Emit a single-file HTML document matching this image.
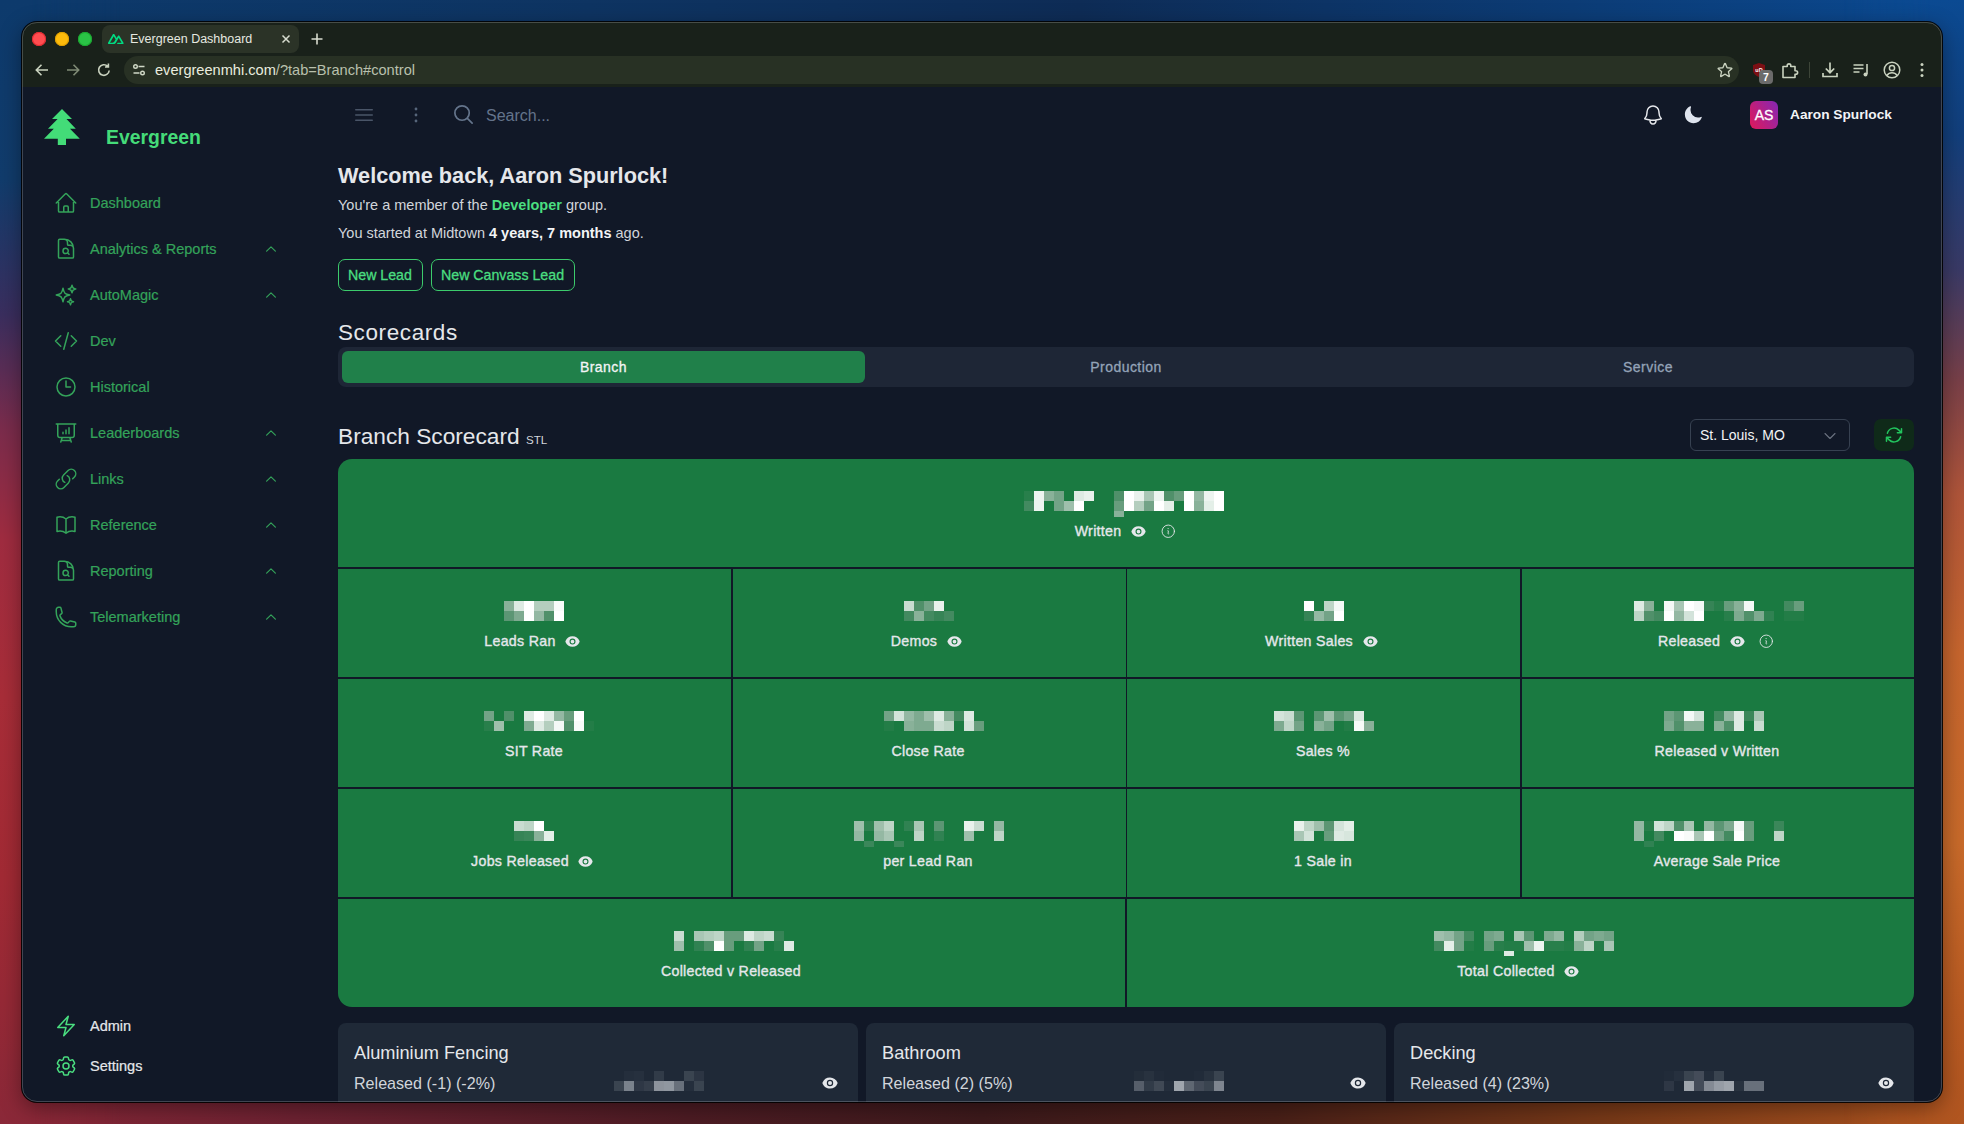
<!DOCTYPE html>
<html><head><meta charset="utf-8">
<style>
*{box-sizing:border-box;margin:0;padding:0}
html,body{width:1964px;height:1124px;overflow:hidden}
body{font-family:"Liberation Sans",sans-serif;position:relative;background:#3a1a22}
.bgl{position:absolute;left:0;top:0;width:120px;-webkit-mask-image:linear-gradient(90deg,#000 30px,transparent 120px);height:1124px;background:linear-gradient(180deg,#0d3a6c 0%,#113c6c 16%,#3a2e5e 28%,#7a2c4c 38%,#a02c40 48%,#a82d38 62%,#a22a34 78%,#8a2838 100%)}
.bgr{position:absolute;left:1844px;top:0;width:120px;-webkit-mask-image:linear-gradient(90deg,transparent 0,#000 90px);height:1124px;background:linear-gradient(180deg,#0b4a92 0%,#123f7c 12%,#3a3a66 24%,#7a4048 34%,#b0553a 44%,#c6652e 58%,#c86a2a 75%,#b85a22 90%,#b05520 100%)}
.bgt{position:absolute;left:0;top:0;width:1964px;height:44px;background:linear-gradient(90deg,#0d3a6c 0%,#0e3462 30%,#0e2c56 55%,#0c3c76 80%,#0b4a92 100%)}
.bgb{position:absolute;left:0;top:1080px;width:1964px;height:44px;background:linear-gradient(90deg,#8a2838 0%,#6e2232 15%,#4e1c24 35%,#3e1a1c 50%,#4a2018 65%,#7a3a18 82%,#b05520 100%)}
.abs{position:absolute}
.win{position:absolute;left:22px;top:22px;width:1920px;height:1080px;border-radius:15px;background:#111827;overflow:hidden;box-shadow:0 0 0 1px rgba(0,0,0,.9),0 6px 22px rgba(0,0,0,.4)}
.hl{position:absolute;left:22px;top:22px;width:1920px;height:1080px;border-radius:15px;border:1px solid rgba(255,255,255,.2)}
.chrome{position:absolute;left:0;top:0;width:1920px;height:65px;background:#19211a}
.page{position:absolute;left:0;top:0;width:1964px;height:1124px;clip-path:inset(22px 22px 22px 22px round 15px)}
svg{display:block}
.t{position:absolute;white-space:nowrap;line-height:1}
.nav{position:absolute;left:0;width:300px;height:40px}
.nav svg{position:absolute;left:54px;top:8px}
.nav span{position:absolute;left:90px;top:13px;font-size:14.3px;color:#34a35a;line-height:1}
.nav .chev{position:absolute;left:263px;top:12px}
</style></head><body>
<div class="bgt"></div><div class="bgb"></div><div class="bgl"></div><div class="bgr"></div>
<div class="win">
  <div class="chrome"></div>
</div>
<div class="page">
<!-- traffic lights -->
<div class="abs" style="left:32px;top:32px;width:14px;height:14px;border-radius:50%;background:#ff4d50;box-shadow:inset 0 0 0 1px #e02a30"></div>
<div class="abs" style="left:55px;top:32px;width:14px;height:14px;border-radius:50%;background:#fdbb0c;box-shadow:inset 0 0 0 1px #e0a000"></div>
<div class="abs" style="left:78px;top:32px;width:14px;height:14px;border-radius:50%;background:#2ac246;box-shadow:inset 0 0 0 1px #1aa830"></div>
<!-- tab -->
<div class="abs" style="left:102px;top:25px;width:197px;height:28px;border-radius:8px;background:#2b3327"></div>
<svg class="abs" style="left:108px;top:33.7px" width="15.6" height="10.3" viewBox="0 0 48.5 32"><path fill="#00dc82" d="M26.88 32H44.64C45.2 32 45.76 31.84 46.24 31.68C46.72 31.52 47.2 31.04 47.52 30.72C47.84 30.4 48.16 29.920 48.32 29.28C48.48 28.8 48.48 28.16 48.32 27.68C48.16 27.2 48 26.72 47.68 26.24L35.68 6.08C35.36 5.6 35.04 5.12 34.56 4.96C34.08 4.64 33.6 4.48 33.120 4.48C32.64 4.48 32.16 4.64 31.68 4.8C31.2 5.12 30.88 5.44 30.56 5.92L26.88 12.32L19.84 0.96C19.52 0.48 19.2 0.16 18.72 0C18.24-0.16 17.76 0 17.28 0C16.8 0 16.32 0.16 15.84 0.32C15.36 0.64 15.04 0.96 14.72 1.44L0.48 26.24C0.16 26.72 0 27.2 0 27.68C0 28.16 0 28.8 0.16 29.28C0.32 29.76 0.64 30.24 0.96 30.72C1.28 31.2 1.76 31.52 2.24 31.68C2.72 31.84 3.28 32 3.84 32H15.04C19.52 32 22.72 30.08 24.96 26.24L30.4 16.8L33.28 11.84L42.08 26.88H30.4L26.88 32ZM14.08 26.88H6.24L17.920 6.720L23.68 16.8L19.84 23.52C18.4 25.92 16.8 26.88 14.08 26.88Z"/></svg>
<div class="t" style="left:130px;top:33px;font-size:12.5px;color:#e6e9e0">Evergreen Dashboard</div>
<svg class="abs" style="left:281px;top:34px" width="10" height="10" viewBox="0 0 10 10"><path d="M1.5 1.5l7 7M8.5 1.5l-7 7" stroke="#d7dccf" stroke-width="1.5"/></svg>
<svg class="abs" style="left:310px;top:32px" width="14" height="14" viewBox="0 0 14 14"><path d="M7 1.5v11M1.5 7h11" stroke="#d7dccf" stroke-width="1.6"/></svg>
<!-- toolbar -->
<svg class="abs" style="left:33px;top:61px" width="18" height="18" viewBox="0 0 18 18"><path d="M15 9H3.5M8.5 3.8L3.3 9l5.2 5.2" fill="none" stroke="#c9d2bf" stroke-width="1.6"/></svg>
<svg class="abs" style="left:64px;top:61px" width="18" height="18" viewBox="0 0 18 18"><path d="M3 9h11.5M9.5 3.8L14.7 9l-5.2 5.2" fill="none" stroke="#7f8a75" stroke-width="1.6"/></svg>
<svg class="abs" style="left:95px;top:61px" width="18" height="18" viewBox="0 0 18 18"><path d="M14.2 9.5a5.3 5.3 0 1 1-1.6-4.3M13.4 2.6v3.4H10" fill="none" stroke="#c9d2bf" stroke-width="1.6"/></svg>
<div class="abs" style="left:124px;top:56px;width:1615px;height:28px;border-radius:14px;background:#283124"></div>
<svg class="abs" style="left:131px;top:62px" width="16" height="16" viewBox="0 0 16 16"><g fill="none" stroke="#d0d8c6" stroke-width="1.4"><circle cx="4.5" cy="4.5" r="1.8"/><path d="M7.5 4.5h6M2.5 11h6"/><circle cx="11.5" cy="11" r="1.8"/></g></svg>
<div class="t" style="left:155px;top:63px;font-size:14.6px;color:#e9ecdf">evergreenmhi.com<span style="color:#b9c0ad">/?tab=Branch#control</span></div>
<svg class="abs" style="left:1716px;top:61px" width="18" height="18" viewBox="0 0 24 24"><path d="M11.48 3.5a.56.56 0 011.04 0l2.12 5.11a.56.56 0 00.48.35l5.52.44c.5.04.7.66.32.99l-4.2 3.6a.56.56 0 00-.18.56l1.28 5.39a.56.56 0 01-.84.61l-4.72-2.88a.56.56 0 00-.59 0l-4.72 2.88a.56.56 0 01-.84-.61l1.28-5.39a.56.56 0 00-.18-.56l-4.2-3.6a.56.56 0 01.32-.99l5.52-.44a.56.56 0 00.47-.35z" fill="none" stroke="#c9d2bf" stroke-width="1.8"/></svg>
<!-- extensions -->
<svg class="abs" style="left:1751px;top:62px" width="16" height="16" viewBox="0 0 16 16"><path d="M8 1 L14 3 V8 C14 11.5 11 14 8 15 C5 14 2 11.5 2 8 V3 Z" fill="#7c0f14"/><text x="8" y="10" font-size="5.5" fill="#fff" text-anchor="middle" font-family="Liberation Sans" font-weight="bold">uD</text></svg>
<div class="abs" style="left:1759px;top:70px;width:14px;height:14px;border-radius:4px;background:#6b6b6b;color:#fff;font-size:10.5px;font-weight:bold;text-align:center;line-height:14px">7</div>
<svg class="abs" style="left:1780px;top:60px" width="20" height="20" viewBox="0 0 20 20"><path d="M3 6.5h4.2v-.8a1.8 1.8 0 013.6 0v.8H15v4.2h.8a1.8 1.8 0 010 3.6H15v3.2H3z" fill="none" stroke="#c9d2bf" stroke-width="1.6" stroke-linejoin="round"/></svg>
<div class="abs" style="left:1809px;top:62px;width:1px;height:16px;background:#3d4538"></div>
<svg class="abs" style="left:1820px;top:60px" width="20" height="20" viewBox="0 0 20 20"><path d="M10 2.5v10M5.8 8.5L10 12.7l4.2-4.2M3 13v3.5h14V13" fill="none" stroke="#c9d2bf" stroke-width="1.7"/></svg>
<svg class="abs" style="left:1851px;top:60px" width="20" height="20" viewBox="0 0 20 20"><path d="M2.5 5h10M2.5 8.5h10M2.5 12h6M16 4v10" fill="none" stroke="#c9d2bf" stroke-width="1.6"/><circle cx="14.5" cy="14.5" r="2" fill="#c9d2bf"/></svg>
<svg class="abs" style="left:1882px;top:60px" width="20" height="20" viewBox="0 0 20 20"><g fill="none" stroke="#c9d2bf" stroke-width="1.5"><circle cx="10" cy="10" r="7.8"/><circle cx="10" cy="8" r="2.6"/><path d="M4.8 15.5c1.4-2 3.2-2.8 5.2-2.8s3.8.8 5.2 2.8"/></g></svg>
<svg class="abs" style="left:1914px;top:60px" width="16" height="20" viewBox="0 0 16 20"><g fill="#c9d2bf"><circle cx="8" cy="4.5" r="1.5"/><circle cx="8" cy="10" r="1.5"/><circle cx="8" cy="15.5" r="1.5"/></g></svg>

<!-- SIDEBAR -->
<svg class="abs" style="left:44px;top:109px" width="36" height="36" viewBox="0 0 36 36"><path fill="#43dc78" d="M18 0 L28 10 H22.5 L31.8 19.8 H26 L35.8 29.8 H22 V36 H13.8 V29.8 H0 L9.8 19.8 H4 L13.6 10 H8 Z"/></svg>
<div class="t" style="left:106px;top:128px;font-size:19.4px;font-weight:bold;color:#45db79">Evergreen</div>

<svg class="abs" style="left:54px;top:191px" width="24" height="24" viewBox="0 0 24 24"><path d="M2.25 12l8.954-8.955c.44-.439 1.152-.439 1.591 0L21.75 12M4.5 9.75v10.125c0 .621.504 1.125 1.125 1.125H9.75v-4.875c0-.621.504-1.125 1.125-1.125h2.25c.621 0 1.125.504 1.125 1.125V21h4.125c.621 0 1.125-.504 1.125-1.125V9.75M8.25 21h8.25" fill="none" stroke="#34a35a" stroke-width="1.5" stroke-linecap="round" stroke-linejoin="round"/></svg>
<div class="t" style="left:90px;top:196px;font-size:14.5px;color:#34a35a;font-weight:normal;-webkit-text-stroke:0.2px #34a35a">Dashboard</div>
<svg class="abs" style="left:54px;top:237px" width="24" height="24" viewBox="0 0 24 24"><path d="M19.5 14.25v-2.625a3.375 3.375 0 00-3.375-3.375h-1.5A1.125 1.125 0 0113.5 7.125v-1.5a3.375 3.375 0 00-3.375-3.375H8.25m5.231 13.481L15 17.25m-4.5-15H5.625c-.621 0-1.125.504-1.125 1.125v16.5c0 .621.504 1.125 1.125 1.125h12.75c.621 0 1.125-.504 1.125-1.125V11.25a9 9 0 00-9-9zm3.75 11.625a2.625 2.625 0 11-5.25 0 2.625 2.625 0 015.25 0z" fill="none" stroke="#34a35a" stroke-width="1.5" stroke-linecap="round" stroke-linejoin="round"/></svg>
<div class="t" style="left:90px;top:242px;font-size:14.5px;color:#34a35a;font-weight:normal;-webkit-text-stroke:0.2px #34a35a">Analytics &amp; Reports</div>
<svg class="abs" style="left:264px;top:242px" width="14" height="14" viewBox="0 0 24 24"><path d="M4.5 15.75l7.5-7.5 7.5 7.5" fill="none" stroke="#34a35a" stroke-width="2" stroke-linecap="round" stroke-linejoin="round"/></svg>
<svg class="abs" style="left:54px;top:283px" width="24" height="24" viewBox="0 0 24 24"><path d="M9.813 15.904L9 18.75l-.813-2.846a4.5 4.5 0 00-3.09-3.09L2.25 12l2.846-.813a4.5 4.5 0 003.09-3.09L9 5.25l.813 2.846a4.5 4.5 0 003.09 3.09L15.75 12l-2.846.813a4.5 4.5 0 00-3.09 3.09zM18.259 8.715L18 9.75l-.259-1.035a3.375 3.375 0 00-2.455-2.456L14.25 6l1.036-.259a3.375 3.375 0 002.455-2.456L18 2.25l.259 1.035a3.375 3.375 0 002.456 2.456L21.75 6l-1.035.259a3.375 3.375 0 00-2.456 2.456zM16.894 20.567L16.5 21.75l-.394-1.183a2.25 2.25 0 00-1.423-1.423L13.5 18.75l1.183-.394a2.25 2.25 0 001.423-1.423l.394-1.183.394 1.183a2.25 2.25 0 001.423 1.423l1.183.394-1.183.394a2.25 2.25 0 00-1.423 1.423z" fill="none" stroke="#34a35a" stroke-width="1.5" stroke-linecap="round" stroke-linejoin="round"/></svg>
<div class="t" style="left:90px;top:288px;font-size:14.5px;color:#34a35a;font-weight:normal;-webkit-text-stroke:0.2px #34a35a">AutoMagic</div>
<svg class="abs" style="left:264px;top:288px" width="14" height="14" viewBox="0 0 24 24"><path d="M4.5 15.75l7.5-7.5 7.5 7.5" fill="none" stroke="#34a35a" stroke-width="2" stroke-linecap="round" stroke-linejoin="round"/></svg>
<svg class="abs" style="left:54px;top:329px" width="24" height="24" viewBox="0 0 24 24"><path d="M17.25 6.75L22.5 12l-5.25 5.25m-10.5 0L1.5 12l5.25-5.25m7.5-3l-4.5 16.5" fill="none" stroke="#34a35a" stroke-width="1.5" stroke-linecap="round" stroke-linejoin="round"/></svg>
<div class="t" style="left:90px;top:334px;font-size:14.5px;color:#34a35a;font-weight:normal;-webkit-text-stroke:0.2px #34a35a">Dev</div>
<svg class="abs" style="left:54px;top:375px" width="24" height="24" viewBox="0 0 24 24"><path d="M12 6v6h4.5m4.5 0a9 9 0 11-18 0 9 9 0 0118 0z" fill="none" stroke="#34a35a" stroke-width="1.5" stroke-linecap="round" stroke-linejoin="round"/></svg>
<div class="t" style="left:90px;top:380px;font-size:14.5px;color:#34a35a;font-weight:normal;-webkit-text-stroke:0.2px #34a35a">Historical</div>
<svg class="abs" style="left:54px;top:421px" width="24" height="24" viewBox="0 0 24 24"><path d="M3.75 3v11.25A2.25 2.25 0 006 16.5h2.25M3.75 3h-1.5m1.5 0h16.5m0 0h1.5m-1.5 0v11.25A2.25 2.25 0 0118 16.5h-2.25m-7.5 0h7.5m-7.5 0l-1 3m8.5-3l1 3m0 0l.5 1.5m-.5-1.5h-9.5m0 0l-.5 1.5M9 11.25v1.5M12 9v3.75m3-6v6" fill="none" stroke="#34a35a" stroke-width="1.5" stroke-linecap="round" stroke-linejoin="round"/></svg>
<div class="t" style="left:90px;top:426px;font-size:14.5px;color:#34a35a;font-weight:normal;-webkit-text-stroke:0.2px #34a35a">Leaderboards</div>
<svg class="abs" style="left:264px;top:426px" width="14" height="14" viewBox="0 0 24 24"><path d="M4.5 15.75l7.5-7.5 7.5 7.5" fill="none" stroke="#34a35a" stroke-width="2" stroke-linecap="round" stroke-linejoin="round"/></svg>
<svg class="abs" style="left:54px;top:467px" width="24" height="24" viewBox="0 0 24 24"><path d="M13.19 8.688a4.5 4.5 0 011.242 7.244l-4.5 4.5a4.5 4.5 0 01-6.364-6.364l1.757-1.757m13.35-.622l1.757-1.757a4.5 4.5 0 00-6.364-6.364l-4.5 4.5a4.5 4.5 0 001.242 7.244" fill="none" stroke="#34a35a" stroke-width="1.5" stroke-linecap="round" stroke-linejoin="round"/></svg>
<div class="t" style="left:90px;top:472px;font-size:14.5px;color:#34a35a;font-weight:normal;-webkit-text-stroke:0.2px #34a35a">Links</div>
<svg class="abs" style="left:264px;top:472px" width="14" height="14" viewBox="0 0 24 24"><path d="M4.5 15.75l7.5-7.5 7.5 7.5" fill="none" stroke="#34a35a" stroke-width="2" stroke-linecap="round" stroke-linejoin="round"/></svg>
<svg class="abs" style="left:54px;top:513px" width="24" height="24" viewBox="0 0 24 24"><path d="M12 6.042A8.967 8.967 0 006 3.75c-1.052 0-2.062.18-3 .512v14.25A8.987 8.987 0 016 18c2.305 0 4.408.867 6 2.292m0-14.25a8.966 8.966 0 016-2.292c1.052 0 2.062.18 3 .512v14.25A8.987 8.987 0 0018 18a8.967 8.967 0 00-6 2.292m0-14.25v14.25" fill="none" stroke="#34a35a" stroke-width="1.5" stroke-linecap="round" stroke-linejoin="round"/></svg>
<div class="t" style="left:90px;top:518px;font-size:14.5px;color:#34a35a;font-weight:normal;-webkit-text-stroke:0.2px #34a35a">Reference</div>
<svg class="abs" style="left:264px;top:518px" width="14" height="14" viewBox="0 0 24 24"><path d="M4.5 15.75l7.5-7.5 7.5 7.5" fill="none" stroke="#34a35a" stroke-width="2" stroke-linecap="round" stroke-linejoin="round"/></svg>
<svg class="abs" style="left:54px;top:559px" width="24" height="24" viewBox="0 0 24 24"><path d="M19.5 14.25v-2.625a3.375 3.375 0 00-3.375-3.375h-1.5A1.125 1.125 0 0113.5 7.125v-1.5a3.375 3.375 0 00-3.375-3.375H8.25m5.231 13.481L15 17.25m-4.5-15H5.625c-.621 0-1.125.504-1.125 1.125v16.5c0 .621.504 1.125 1.125 1.125h12.75c.621 0 1.125-.504 1.125-1.125V11.25a9 9 0 00-9-9zm3.75 11.625a2.625 2.625 0 11-5.25 0 2.625 2.625 0 015.25 0z" fill="none" stroke="#34a35a" stroke-width="1.5" stroke-linecap="round" stroke-linejoin="round"/></svg>
<div class="t" style="left:90px;top:564px;font-size:14.5px;color:#34a35a;font-weight:normal;-webkit-text-stroke:0.2px #34a35a">Reporting</div>
<svg class="abs" style="left:264px;top:564px" width="14" height="14" viewBox="0 0 24 24"><path d="M4.5 15.75l7.5-7.5 7.5 7.5" fill="none" stroke="#34a35a" stroke-width="2" stroke-linecap="round" stroke-linejoin="round"/></svg>
<svg class="abs" style="left:54px;top:605px" width="24" height="24" viewBox="0 0 24 24"><path d="M2.25 6.75c0 8.284 6.716 15 15 15h2.25a2.25 2.25 0 002.25-2.25v-1.372c0-.516-.351-.966-.852-1.091l-4.423-1.106c-.44-.11-.902.055-1.173.417l-.97 1.293c-.282.376-.769.542-1.21.38a12.035 12.035 0 01-7.143-7.143c-.162-.441.004-.928.38-1.21l1.293-.97c.363-.271.527-.734.417-1.173L6.963 3.102a1.125 1.125 0 00-1.091-.852H4.5A2.25 2.25 0 002.25 4.5v2.25z" fill="none" stroke="#34a35a" stroke-width="1.5" stroke-linecap="round" stroke-linejoin="round"/></svg>
<div class="t" style="left:90px;top:610px;font-size:14.5px;color:#34a35a;font-weight:normal;-webkit-text-stroke:0.2px #34a35a">Telemarketing</div>
<svg class="abs" style="left:264px;top:610px" width="14" height="14" viewBox="0 0 24 24"><path d="M4.5 15.75l7.5-7.5 7.5 7.5" fill="none" stroke="#34a35a" stroke-width="2" stroke-linecap="round" stroke-linejoin="round"/></svg>
<svg class="abs" style="left:54px;top:1014px" width="24" height="24" viewBox="0 0 24 24"><path d="M3.75 13.5l10.5-11.25L12 10.5h8.25L9.75 21.75 12 13.5H3.75z" fill="none" stroke="#4ade80" stroke-width="1.5" stroke-linecap="round" stroke-linejoin="round"/></svg>
<div class="t" style="left:90px;top:1019px;font-size:14.5px;color:#e5e7eb;font-weight:normal;-webkit-text-stroke:0.2px #e5e7eb">Admin</div>
<svg class="abs" style="left:54px;top:1054px" width="24" height="24" viewBox="0 0 24 24"><path d="M9.594 3.94c.09-.542.56-.94 1.11-.94h2.593c.55 0 1.02.398 1.11.94l.213 1.281c.063.374.313.686.645.87.074.04.147.083.22.127.324.196.72.257 1.075.124l1.217-.456a1.125 1.125 0 011.37.49l1.296 2.247a1.125 1.125 0 01-.26 1.431l-1.003.827c-.293.24-.438.613-.431.992a6.759 6.759 0 010 .255c-.007.378.138.75.43.99l1.005.828c.424.35.534.954.26 1.43l-1.298 2.247a1.125 1.125 0 01-1.369.491l-1.217-.456c-.355-.133-.75-.072-1.076.124a6.57 6.57 0 01-.22.128c-.331.183-.581.495-.644.869l-.213 1.28c-.09.543-.56.941-1.11.941h-2.594c-.55 0-1.02-.398-1.11-.94l-.213-1.281c-.062-.374-.312-.686-.644-.87a6.52 6.52 0 01-.22-.127c-.325-.196-.72-.257-1.076-.124l-1.217.456a1.125 1.125 0 01-1.369-.49l-1.297-2.247a1.125 1.125 0 01.26-1.431l1.004-.827c.292-.24.437-.613.43-.992a6.932 6.932 0 010-.255c.007-.378-.138-.75-.43-.99l-1.004-.828a1.125 1.125 0 01-.26-1.43l1.297-2.247a1.125 1.125 0 011.37-.491l1.216.456c.356.133.751.072 1.076-.124.072-.044.146-.087.22-.128.332-.183.582-.495.644-.869l.214-1.281zM15 12a3 3 0 11-6 0 3 3 0 016 0z" fill="none" stroke="#4ade80" stroke-width="1.5" stroke-linecap="round" stroke-linejoin="round"/></svg>
<div class="t" style="left:90px;top:1059px;font-size:14.5px;color:#e5e7eb;font-weight:normal;-webkit-text-stroke:0.2px #e5e7eb">Settings</div>
<svg class="abs" style="left:352px;top:103px" width="24" height="24" viewBox="0 0 24 24"><path d="M3.75 6.75h16.5M3.75 12h16.5m-16.5 5.25h16.5" fill="none" stroke="#4a5568" stroke-width="1.5" stroke-linecap="round" stroke-linejoin="round"/></svg>
<svg class="abs" style="left:404px;top:103px" width="24" height="24" viewBox="0 0 24 24"><g fill="#56657a"><circle cx="12" cy="6" r="1.4"/><circle cx="12" cy="12" r="1.4"/><circle cx="12" cy="18" r="1.4"/></g></svg>
<svg class="abs" style="left:452px;top:103px" width="23" height="23" viewBox="0 0 24 24"><path d="M21 21l-5.197-5.197m0 0A7.5 7.5 0 105.196 5.196a7.5 7.5 0 0010.607 10.607z" fill="none" stroke="#64748b" stroke-width="1.8" stroke-linecap="round" stroke-linejoin="round"/></svg>
<div class="t" style="left:486px;top:108px;font-size:16px;color:#64748b;font-weight:normal;">Search...</div>
<svg class="abs" style="left:1641px;top:103px" width="24" height="24" viewBox="0 0 24 24"><path d="M14.857 17.082a23.848 23.848 0 005.454-1.31A8.967 8.967 0 0118 9.75v-.7V9A6 6 0 006 9v.75a8.967 8.967 0 01-2.312 6.022c1.733.64 3.56 1.085 5.455 1.31m5.714 0a24.255 24.255 0 01-5.714 0m5.714 0a3 3 0 11-5.714 0" fill="none" stroke="#e5e7eb" stroke-width="1.5" stroke-linecap="round" stroke-linejoin="round"/></svg>
<svg class="abs" style="left:1683px;top:105px" width="20" height="20" viewBox="0 0 24 24"><path fill="#dfe4ee" d="M9.528 1.718a.75.75 0 01.162.819A8.97 8.97 0 009 6a9 9 0 009 9 8.97 8.97 0 003.463-.69.75.75 0 01.981.98 10.503 10.503 0 01-9.694 6.46c-5.799 0-10.5-4.701-10.5-10.5 0-4.368 2.667-8.112 6.46-9.694a.75.75 0 01.818.162z"/></svg>
<div class="abs" style="left:1750px;top:101px;width:28px;height:28px;border-radius:6px;background:linear-gradient(60deg,#e0195a 0%,#8527b5 100%)"></div>
<div class="t" style="left:1750px;top:108px;font-size:14px;color:#ffffff;font-weight:normal;width:28px;text-align:center;-webkit-text-stroke:0.3px #fff">AS</div>
<div class="t" style="left:1790px;top:108px;font-size:13.7px;color:#f3f4f6;font-weight:bold;">Aaron Spurlock</div>
<div class="t" style="left:338px;top:165px;font-size:21.7px;color:#e5e7eb;font-weight:bold;">Welcome back, Aaron Spurlock!</div>
<div class="t" style="left:338px;top:198px;font-size:14.5px;color:#d1d5db;font-weight:normal;">You're a member of the <span style="color:#4ade80;font-weight:bold">Developer</span> group.</div>
<div class="t" style="left:338px;top:226px;font-size:14.5px;color:#d1d5db;font-weight:normal;">You started at Midtown <b style="color:#f3f4f6">4 years, 7 months</b> ago.</div>
<div class="abs" style="left:338px;top:259px;width:85px;height:32px;border:1.5px solid #3ccb6c;border-radius:7px"></div>
<div class="t" style="left:348px;top:268px;font-size:14.2px;color:#4ade80;font-weight:normal;-webkit-text-stroke:0.3px #4ade80">New Lead</div>
<div class="abs" style="left:431px;top:259px;width:144px;height:32px;border:1.5px solid #3ccb6c;border-radius:7px"></div>
<div class="t" style="left:441px;top:268px;font-size:14.2px;color:#4ade80;font-weight:normal;-webkit-text-stroke:0.3px #4ade80">New Canvass Lead</div>
<div class="t" style="left:338px;top:322px;font-size:22.5px;color:#e5e7eb;font-weight:normal;letter-spacing:0.6px">Scorecards</div>
<div class="abs" style="left:338px;top:347px;width:1576px;height:40px;border-radius:8px;background:#1e2636"></div>
<div class="abs" style="left:342px;top:351px;width:523px;height:32px;border-radius:6px;background:#20804a"></div>
<div class="t" style="left:342px;top:360px;font-size:14px;color:#f3f4f6;font-weight:normal;width:523px;text-align:center;-webkit-text-stroke:0.3px #f3f4f6;letter-spacing:0.45px">Branch</div>
<div class="t" style="left:865px;top:360px;font-size:14px;color:#94a3b8;font-weight:normal;width:522px;text-align:center;-webkit-text-stroke:0.3px #94a3b8;letter-spacing:0.45px">Production</div>
<div class="t" style="left:1387px;top:360px;font-size:14px;color:#94a3b8;font-weight:normal;width:522px;text-align:center;-webkit-text-stroke:0.3px #94a3b8;letter-spacing:0.45px">Service</div>
<div class="t" style="left:338px;top:425px;font-size:22.7px;color:#e5e7eb;font-weight:normal;">Branch Scorecard <span style="font-size:11.6px;color:#d1d5db">STL</span></div>
<div class="abs" style="left:1690px;top:419px;width:160px;height:32px;border:1px solid #374151;border-radius:6px"></div>
<div class="t" style="left:1700px;top:428px;font-size:14px;color:#f3f4f6;font-weight:normal;">St. Louis, MO</div>
<svg class="abs" style="left:1822px;top:428px" width="16" height="16" viewBox="0 0 24 24"><path d="M19.5 8.25l-7.5 7.5-7.5-7.5" fill="none" stroke="#6b7280" stroke-width="1.6" stroke-linecap="round" stroke-linejoin="round"/></svg>
<div class="abs" style="left:1874px;top:419px;width:40px;height:32px;border-radius:7px;background:#0f2a19"></div>
<svg class="abs" style="left:1884px;top:425px" width="20" height="20" viewBox="0 0 24 24"><path d="M16.023 9.348h4.992v-.001M2.985 19.644v-4.992m0 0h4.992m-4.993 0l3.181 3.183a8.25 8.25 0 0013.803-3.7M4.031 9.865a8.25 8.25 0 0113.803-3.7l3.181 3.182m0-4.991v4.99" fill="none" stroke="#22c55e" stroke-width="1.8" stroke-linecap="round" stroke-linejoin="round"/></svg>
<div class="abs" style="left:338px;top:459px;width:1576px;height:548px;border-radius:14px;overflow:hidden;background:#111827">
<div class="abs" style="left:0px;top:0px;width:1576px;height:108px;background:#1a7a41"></div>
<div class="abs" style="left:0px;top:110px;width:393px;height:108px;background:#1a7a41"></div>
<div class="abs" style="left:395px;top:110px;width:393px;height:108px;background:#1a7a41"></div>
<div class="abs" style="left:789px;top:110px;width:393px;height:108px;background:#1a7a41"></div>
<div class="abs" style="left:1184px;top:110px;width:392px;height:108px;background:#1a7a41"></div>
<div class="abs" style="left:0px;top:220px;width:393px;height:108px;background:#1a7a41"></div>
<div class="abs" style="left:395px;top:220px;width:393px;height:108px;background:#1a7a41"></div>
<div class="abs" style="left:789px;top:220px;width:393px;height:108px;background:#1a7a41"></div>
<div class="abs" style="left:1184px;top:220px;width:392px;height:108px;background:#1a7a41"></div>
<div class="abs" style="left:0px;top:330px;width:393px;height:108px;background:#1a7a41"></div>
<div class="abs" style="left:395px;top:330px;width:393px;height:108px;background:#1a7a41"></div>
<div class="abs" style="left:789px;top:330px;width:393px;height:108px;background:#1a7a41"></div>
<div class="abs" style="left:1184px;top:330px;width:392px;height:108px;background:#1a7a41"></div>
<div class="abs" style="left:0px;top:440px;width:787px;height:108px;background:#1a7a41"></div>
<div class="abs" style="left:789px;top:440px;width:787px;height:108px;background:#1a7a41"></div>
</div>
<div class="t" style="left:1074.7px;top:524px;font-size:14.2px;color:#e5e7eb;font-weight:normal;-webkit-text-stroke:0.35px #e5e7eb;letter-spacing:0.3px">Written</div>
<svg class="abs" style="left:1131.0px;top:523.5px" width="15" height="15" viewBox="0 0 20 20"><path fill-rule="evenodd" d="M10 12.5a2.5 2.5 0 100-5 2.5 2.5 0 000 5z M.664 10.59a1.651 1.651 0 010-1.186A10.004 10.004 0 0110 3c4.257 0 7.893 2.66 9.336 6.41.147.381.146.804 0 1.186A10.004 10.004 0 0110 17c-4.257 0-7.893-2.66-9.336-6.41zM14 10a4 4 0 11-8 0 4 4 0 018 0z" fill="#e5e7eb"/></svg>
<svg class="abs" style="left:1159.6px;top:522.7px" width="16.5" height="16.5" viewBox="0 0 24 24"><path d="M11.25 11.25l.041-.02a.75.75 0 011.063.852l-.708 2.836a.75.75 0 001.063.853l.041-.021M21 12a9 9 0 11-18 0 9 9 0 0118 0zm-9-3.75h.008v.008H12V8.25z" fill="none" stroke="#e5e7eb" stroke-width="1.3" stroke-linecap="round" stroke-linejoin="round"/></svg>
<div class="t" style="left:484.3px;top:634px;font-size:14.2px;color:#e5e7eb;font-weight:normal;-webkit-text-stroke:0.35px #e5e7eb;letter-spacing:0.3px">Leads Ran</div>
<svg class="abs" style="left:565.2px;top:633.5px" width="15" height="15" viewBox="0 0 20 20"><path fill-rule="evenodd" d="M10 12.5a2.5 2.5 0 100-5 2.5 2.5 0 000 5z M.664 10.59a1.651 1.651 0 010-1.186A10.004 10.004 0 0110 3c4.257 0 7.893 2.66 9.336 6.41.147.381.146.804 0 1.186A10.004 10.004 0 0110 17c-4.257 0-7.893-2.66-9.336-6.41zM14 10a4 4 0 11-8 0 4 4 0 018 0z" fill="#e5e7eb"/></svg>
<div class="t" style="left:890.8px;top:634px;font-size:14.2px;color:#e5e7eb;font-weight:normal;-webkit-text-stroke:0.35px #e5e7eb;letter-spacing:0.3px">Demos</div>
<svg class="abs" style="left:946.7px;top:633.5px" width="15" height="15" viewBox="0 0 20 20"><path fill-rule="evenodd" d="M10 12.5a2.5 2.5 0 100-5 2.5 2.5 0 000 5z M.664 10.59a1.651 1.651 0 010-1.186A10.004 10.004 0 0110 3c4.257 0 7.893 2.66 9.336 6.41.147.381.146.804 0 1.186A10.004 10.004 0 0110 17c-4.257 0-7.893-2.66-9.336-6.41zM14 10a4 4 0 11-8 0 4 4 0 018 0z" fill="#e5e7eb"/></svg>
<div class="t" style="left:1265.0px;top:634px;font-size:14.2px;color:#e5e7eb;font-weight:normal;-webkit-text-stroke:0.35px #e5e7eb;letter-spacing:0.3px">Written Sales</div>
<svg class="abs" style="left:1362.5px;top:633.5px" width="15" height="15" viewBox="0 0 20 20"><path fill-rule="evenodd" d="M10 12.5a2.5 2.5 0 100-5 2.5 2.5 0 000 5z M.664 10.59a1.651 1.651 0 010-1.186A10.004 10.004 0 0110 3c4.257 0 7.893 2.66 9.336 6.41.147.381.146.804 0 1.186A10.004 10.004 0 0110 17c-4.257 0-7.893-2.66-9.336-6.41zM14 10a4 4 0 11-8 0 4 4 0 018 0z" fill="#e5e7eb"/></svg>
<div class="t" style="left:1657.9px;top:634px;font-size:14.2px;color:#e5e7eb;font-weight:normal;-webkit-text-stroke:0.35px #e5e7eb;letter-spacing:0.3px">Released</div>
<svg class="abs" style="left:1729.8px;top:633.5px" width="15" height="15" viewBox="0 0 20 20"><path fill-rule="evenodd" d="M10 12.5a2.5 2.5 0 100-5 2.5 2.5 0 000 5z M.664 10.59a1.651 1.651 0 010-1.186A10.004 10.004 0 0110 3c4.257 0 7.893 2.66 9.336 6.41.147.381.146.804 0 1.186A10.004 10.004 0 0110 17c-4.257 0-7.893-2.66-9.336-6.41zM14 10a4 4 0 11-8 0 4 4 0 018 0z" fill="#e5e7eb"/></svg>
<svg class="abs" style="left:1758.4px;top:632.7px" width="16.5" height="16.5" viewBox="0 0 24 24"><path d="M11.25 11.25l.041-.02a.75.75 0 011.063.852l-.708 2.836a.75.75 0 001.063.853l.041-.021M21 12a9 9 0 11-18 0 9 9 0 0118 0zm-9-3.75h.008v.008H12V8.25z" fill="none" stroke="#e5e7eb" stroke-width="1.3" stroke-linecap="round" stroke-linejoin="round"/></svg>
<div class="t" style="left:504.9px;top:744px;font-size:14.2px;color:#e5e7eb;font-weight:normal;-webkit-text-stroke:0.35px #e5e7eb;letter-spacing:0.3px">SIT Rate</div>
<div class="t" style="left:891.4px;top:744px;font-size:14.2px;color:#e5e7eb;font-weight:normal;-webkit-text-stroke:0.35px #e5e7eb;letter-spacing:0.3px">Close Rate</div>
<div class="t" style="left:1295.9px;top:744px;font-size:14.2px;color:#e5e7eb;font-weight:normal;-webkit-text-stroke:0.35px #e5e7eb;letter-spacing:0.3px">Sales %</div>
<div class="t" style="left:1654.5px;top:744px;font-size:14.2px;color:#e5e7eb;font-weight:normal;-webkit-text-stroke:0.35px #e5e7eb;letter-spacing:0.3px">Released v Written</div>
<div class="t" style="left:471.1px;top:854px;font-size:14.2px;color:#e5e7eb;font-weight:normal;-webkit-text-stroke:0.35px #e5e7eb;letter-spacing:0.3px">Jobs Released</div>
<svg class="abs" style="left:578.4px;top:853.5px" width="15" height="15" viewBox="0 0 20 20"><path fill-rule="evenodd" d="M10 12.5a2.5 2.5 0 100-5 2.5 2.5 0 000 5z M.664 10.59a1.651 1.651 0 010-1.186A10.004 10.004 0 0110 3c4.257 0 7.893 2.66 9.336 6.41.147.381.146.804 0 1.186A10.004 10.004 0 0110 17c-4.257 0-7.893-2.66-9.336-6.41zM14 10a4 4 0 11-8 0 4 4 0 018 0z" fill="#e5e7eb"/></svg>
<div class="t" style="left:883.2px;top:854px;font-size:14.2px;color:#e5e7eb;font-weight:normal;-webkit-text-stroke:0.35px #e5e7eb;letter-spacing:0.3px">per Lead Ran</div>
<div class="t" style="left:1294.0px;top:854px;font-size:14.2px;color:#e5e7eb;font-weight:normal;-webkit-text-stroke:0.35px #e5e7eb;letter-spacing:0.3px">1 Sale in</div>
<div class="t" style="left:1653.7px;top:854px;font-size:14.2px;color:#e5e7eb;font-weight:normal;-webkit-text-stroke:0.35px #e5e7eb;letter-spacing:0.3px">Average Sale Price</div>
<div class="t" style="left:660.9px;top:964px;font-size:14.2px;color:#e5e7eb;font-weight:normal;-webkit-text-stroke:0.35px #e5e7eb;letter-spacing:0.3px">Collected v Released</div>
<div class="t" style="left:1457.2px;top:964px;font-size:14.2px;color:#e5e7eb;font-weight:normal;-webkit-text-stroke:0.35px #e5e7eb;letter-spacing:0.3px">Total Collected</div>
<svg class="abs" style="left:1564.3px;top:963.5px" width="15" height="15" viewBox="0 0 20 20"><path fill-rule="evenodd" d="M10 12.5a2.5 2.5 0 100-5 2.5 2.5 0 000 5z M.664 10.59a1.651 1.651 0 010-1.186A10.004 10.004 0 0110 3c4.257 0 7.893 2.66 9.336 6.41.147.381.146.804 0 1.186A10.004 10.004 0 0110 17c-4.257 0-7.893-2.66-9.336-6.41zM14 10a4 4 0 11-8 0 4 4 0 018 0z" fill="#e5e7eb"/></svg>
<div class="abs" style="left:338px;top:1023px;width:520px;height:100px;border-radius:8px;background:#1f2937"></div>
<div class="t" style="left:354px;top:1044px;font-size:18.2px;color:#e5e7eb;font-weight:normal;">Aluminium Fencing</div>
<div class="t" style="left:354px;top:1075px;font-size:16.1px;color:#d1d5db;font-weight:normal;">Released (-1) (-2%)</div>
<svg class="abs" style="left:822px;top:1075px" width="16" height="16" viewBox="0 0 20 20"><path fill-rule="evenodd" d="M10 12.5a2.5 2.5 0 100-5 2.5 2.5 0 000 5z M.664 10.59a1.651 1.651 0 010-1.186A10.004 10.004 0 0110 3c4.257 0 7.893 2.66 9.336 6.41.147.381.146.804 0 1.186A10.004 10.004 0 0110 17c-4.257 0-7.893-2.66-9.336-6.41zM14 10a4 4 0 11-8 0 4 4 0 018 0z" fill="#e5e7eb"/></svg>
<div class="abs" style="left:866px;top:1023px;width:520px;height:100px;border-radius:8px;background:#1f2937"></div>
<div class="t" style="left:882px;top:1044px;font-size:18.2px;color:#e5e7eb;font-weight:normal;">Bathroom</div>
<div class="t" style="left:882px;top:1075px;font-size:16.1px;color:#d1d5db;font-weight:normal;">Released (2) (5%)</div>
<svg class="abs" style="left:1350px;top:1075px" width="16" height="16" viewBox="0 0 20 20"><path fill-rule="evenodd" d="M10 12.5a2.5 2.5 0 100-5 2.5 2.5 0 000 5z M.664 10.59a1.651 1.651 0 010-1.186A10.004 10.004 0 0110 3c4.257 0 7.893 2.66 9.336 6.41.147.381.146.804 0 1.186A10.004 10.004 0 0110 17c-4.257 0-7.893-2.66-9.336-6.41zM14 10a4 4 0 11-8 0 4 4 0 018 0z" fill="#e5e7eb"/></svg>
<div class="abs" style="left:1394px;top:1023px;width:520px;height:100px;border-radius:8px;background:#1f2937"></div>
<div class="t" style="left:1410px;top:1044px;font-size:18.2px;color:#e5e7eb;font-weight:normal;">Decking</div>
<div class="t" style="left:1410px;top:1075px;font-size:16.1px;color:#d1d5db;font-weight:normal;">Released (4) (23%)</div>
<svg class="abs" style="left:1878px;top:1075px" width="16" height="16" viewBox="0 0 20 20"><path fill-rule="evenodd" d="M10 12.5a2.5 2.5 0 100-5 2.5 2.5 0 000 5z M.664 10.59a1.651 1.651 0 010-1.186A10.004 10.004 0 0110 3c4.257 0 7.893 2.66 9.336 6.41.147.381.146.804 0 1.186A10.004 10.004 0 0110 17c-4.257 0-7.893-2.66-9.336-6.41zM14 10a4 4 0 11-8 0 4 4 0 018 0z" fill="#e5e7eb"/></svg>
<div class="abs" style="left:1024px;top:491px;width:10px;height:10px;background:rgb(40,127,75)"></div>
<div class="abs" style="left:1034px;top:491px;width:10px;height:10px;background:rgb(237,244,240)"></div>
<div class="abs" style="left:1044px;top:491px;width:10px;height:10px;background:rgb(137,177,153)"></div>
<div class="abs" style="left:1054px;top:491px;width:10px;height:10px;background:rgb(115,163,135)"></div>
<div class="abs" style="left:1074px;top:491px;width:10px;height:10px;background:rgb(222,234,227)"></div>
<div class="abs" style="left:1084px;top:491px;width:10px;height:10px;background:rgb(233,241,236)"></div>
<div class="abs" style="left:1114px;top:491px;width:10px;height:10px;background:rgb(80,144,106)"></div>
<div class="abs" style="left:1124px;top:491px;width:10px;height:10px;background:rgb(255,255,255)"></div>
<div class="abs" style="left:1134px;top:491px;width:10px;height:10px;background:rgb(233,241,236)"></div>
<div class="abs" style="left:1144px;top:491px;width:10px;height:10px;background:rgb(169,198,181)"></div>
<div class="abs" style="left:1154px;top:491px;width:10px;height:10px;background:rgb(237,244,240)"></div>
<div class="abs" style="left:1164px;top:491px;width:10px;height:10px;background:rgb(80,144,106)"></div>
<div class="abs" style="left:1174px;top:491px;width:10px;height:10px;background:rgb(104,157,125)"></div>
<div class="abs" style="left:1184px;top:491px;width:10px;height:10px;background:rgb(255,255,255)"></div>
<div class="abs" style="left:1194px;top:491px;width:10px;height:10px;background:rgb(148,184,163)"></div>
<div class="abs" style="left:1204px;top:491px;width:10px;height:10px;background:rgb(237,244,240)"></div>
<div class="abs" style="left:1214px;top:491px;width:10px;height:10px;background:rgb(255,255,255)"></div>
<div class="abs" style="left:1024px;top:501px;width:10px;height:10px;background:rgb(67,138,96)"></div>
<div class="abs" style="left:1034px;top:501px;width:10px;height:10px;background:rgb(237,244,240)"></div>
<div class="abs" style="left:1054px;top:501px;width:10px;height:10px;background:rgb(115,163,135)"></div>
<div class="abs" style="left:1064px;top:501px;width:10px;height:10px;background:rgb(159,191,172)"></div>
<div class="abs" style="left:1074px;top:501px;width:10px;height:10px;background:rgb(255,255,255)"></div>
<div class="abs" style="left:1114px;top:501px;width:10px;height:10px;background:rgb(104,157,125)"></div>
<div class="abs" style="left:1124px;top:501px;width:10px;height:10px;background:rgb(255,255,255)"></div>
<div class="abs" style="left:1134px;top:501px;width:10px;height:10px;background:rgb(180,206,190)"></div>
<div class="abs" style="left:1144px;top:501px;width:10px;height:10px;background:rgb(115,163,135)"></div>
<div class="abs" style="left:1154px;top:501px;width:10px;height:10px;background:rgb(255,255,255)"></div>
<div class="abs" style="left:1164px;top:501px;width:10px;height:10px;background:rgb(228,239,232)"></div>
<div class="abs" style="left:1184px;top:501px;width:10px;height:10px;background:rgb(255,255,255)"></div>
<div class="abs" style="left:1194px;top:501px;width:10px;height:10px;background:rgb(137,177,153)"></div>
<div class="abs" style="left:1204px;top:501px;width:10px;height:10px;background:rgb(228,239,232)"></div>
<div class="abs" style="left:1214px;top:501px;width:10px;height:10px;background:rgb(255,255,255)"></div>
<div class="abs" style="left:1114px;top:511px;width:10px;height:6px;background:rgb(137,177,153)"></div>
<div class="abs" style="left:504px;top:601px;width:10px;height:10px;background:rgb(137,177,153)"></div>
<div class="abs" style="left:514px;top:601px;width:10px;height:10px;background:rgb(222,234,227)"></div>
<div class="abs" style="left:524px;top:601px;width:10px;height:10px;background:rgb(255,255,255)"></div>
<div class="abs" style="left:534px;top:601px;width:10px;height:10px;background:rgb(180,206,190)"></div>
<div class="abs" style="left:544px;top:601px;width:10px;height:10px;background:rgb(180,206,190)"></div>
<div class="abs" style="left:554px;top:601px;width:10px;height:10px;background:rgb(248,251,249)"></div>
<div class="abs" style="left:504px;top:611px;width:10px;height:10px;background:rgb(92,150,116)"></div>
<div class="abs" style="left:514px;top:611px;width:10px;height:10px;background:rgb(126,170,144)"></div>
<div class="abs" style="left:524px;top:611px;width:10px;height:10px;background:rgb(255,255,255)"></div>
<div class="abs" style="left:534px;top:611px;width:10px;height:10px;background:rgb(148,184,163)"></div>
<div class="abs" style="left:544px;top:611px;width:10px;height:10px;background:rgb(80,144,106)"></div>
<div class="abs" style="left:554px;top:611px;width:10px;height:10px;background:rgb(255,255,255)"></div>
<div class="abs" style="left:904px;top:601px;width:10px;height:10px;background:rgb(201,220,209)"></div>
<div class="abs" style="left:914px;top:601px;width:10px;height:10px;background:rgb(80,144,106)"></div>
<div class="abs" style="left:924px;top:601px;width:10px;height:10px;background:rgb(115,163,135)"></div>
<div class="abs" style="left:934px;top:601px;width:10px;height:10px;background:rgb(233,241,236)"></div>
<div class="abs" style="left:904px;top:611px;width:10px;height:10px;background:rgb(67,138,96)"></div>
<div class="abs" style="left:914px;top:611px;width:10px;height:10px;background:rgb(137,177,153)"></div>
<div class="abs" style="left:924px;top:611px;width:10px;height:10px;background:rgb(67,138,96)"></div>
<div class="abs" style="left:934px;top:611px;width:10px;height:10px;background:rgb(54,132,86)"></div>
<div class="abs" style="left:944px;top:611px;width:10px;height:10px;background:rgb(67,138,96)"></div>
<div class="abs" style="left:1304px;top:601px;width:10px;height:10px;background:rgb(255,255,255)"></div>
<div class="abs" style="left:1324px;top:601px;width:10px;height:10px;background:rgb(190,213,199)"></div>
<div class="abs" style="left:1334px;top:601px;width:10px;height:10px;background:rgb(244,248,246)"></div>
<div class="abs" style="left:1304px;top:611px;width:10px;height:10px;background:rgb(54,132,86)"></div>
<div class="abs" style="left:1314px;top:611px;width:10px;height:10px;background:rgb(148,184,163)"></div>
<div class="abs" style="left:1324px;top:611px;width:10px;height:10px;background:rgb(115,163,135)"></div>
<div class="abs" style="left:1334px;top:611px;width:10px;height:10px;background:rgb(255,255,255)"></div>
<div class="abs" style="left:1634px;top:601px;width:10px;height:10px;background:rgb(222,234,227)"></div>
<div class="abs" style="left:1644px;top:601px;width:10px;height:10px;background:rgb(137,177,153)"></div>
<div class="abs" style="left:1664px;top:601px;width:10px;height:10px;background:rgb(244,248,246)"></div>
<div class="abs" style="left:1674px;top:601px;width:10px;height:10px;background:rgb(169,198,181)"></div>
<div class="abs" style="left:1684px;top:601px;width:10px;height:10px;background:rgb(255,255,255)"></div>
<div class="abs" style="left:1694px;top:601px;width:10px;height:10px;background:rgb(244,248,246)"></div>
<div class="abs" style="left:1704px;top:601px;width:10px;height:10px;background:rgb(54,132,86)"></div>
<div class="abs" style="left:1714px;top:601px;width:10px;height:10px;background:rgb(40,127,75)"></div>
<div class="abs" style="left:1724px;top:601px;width:10px;height:10px;background:rgb(104,157,125)"></div>
<div class="abs" style="left:1734px;top:601px;width:10px;height:10px;background:rgb(137,177,153)"></div>
<div class="abs" style="left:1744px;top:601px;width:10px;height:10px;background:rgb(244,248,246)"></div>
<div class="abs" style="left:1784px;top:601px;width:10px;height:10px;background:rgb(67,138,96)"></div>
<div class="abs" style="left:1794px;top:601px;width:10px;height:10px;background:rgb(104,157,125)"></div>
<div class="abs" style="left:1634px;top:611px;width:10px;height:10px;background:rgb(190,213,199)"></div>
<div class="abs" style="left:1644px;top:611px;width:10px;height:10px;background:rgb(80,144,106)"></div>
<div class="abs" style="left:1654px;top:611px;width:10px;height:10px;background:rgb(67,138,96)"></div>
<div class="abs" style="left:1664px;top:611px;width:10px;height:10px;background:rgb(255,255,255)"></div>
<div class="abs" style="left:1674px;top:611px;width:10px;height:10px;background:rgb(148,184,163)"></div>
<div class="abs" style="left:1684px;top:611px;width:10px;height:10px;background:rgb(211,227,218)"></div>
<div class="abs" style="left:1694px;top:611px;width:10px;height:10px;background:rgb(255,255,255)"></div>
<div class="abs" style="left:1724px;top:611px;width:10px;height:10px;background:rgb(40,127,75)"></div>
<div class="abs" style="left:1734px;top:611px;width:10px;height:10px;background:rgb(126,170,144)"></div>
<div class="abs" style="left:1744px;top:611px;width:10px;height:10px;background:rgb(80,144,106)"></div>
<div class="abs" style="left:1754px;top:611px;width:10px;height:10px;background:rgb(126,170,144)"></div>
<div class="abs" style="left:1764px;top:611px;width:10px;height:10px;background:rgb(48,130,82)"></div>
<div class="abs" style="left:1784px;top:611px;width:10px;height:10px;background:rgb(35,125,71)"></div>
<div class="abs" style="left:1794px;top:611px;width:10px;height:10px;background:rgb(35,125,71)"></div>
<div class="abs" style="left:484px;top:711px;width:10px;height:10px;background:rgb(115,163,135)"></div>
<div class="abs" style="left:504px;top:711px;width:10px;height:10px;background:rgb(80,144,106)"></div>
<div class="abs" style="left:524px;top:711px;width:10px;height:10px;background:rgb(222,234,227)"></div>
<div class="abs" style="left:534px;top:711px;width:10px;height:10px;background:rgb(255,255,255)"></div>
<div class="abs" style="left:544px;top:711px;width:10px;height:10px;background:rgb(222,234,227)"></div>
<div class="abs" style="left:554px;top:711px;width:10px;height:10px;background:rgb(148,184,163)"></div>
<div class="abs" style="left:564px;top:711px;width:10px;height:10px;background:rgb(104,157,125)"></div>
<div class="abs" style="left:574px;top:711px;width:10px;height:10px;background:rgb(255,255,255)"></div>
<div class="abs" style="left:484px;top:721px;width:10px;height:10px;background:rgb(40,127,75)"></div>
<div class="abs" style="left:494px;top:721px;width:10px;height:10px;background:rgb(159,191,172)"></div>
<div class="abs" style="left:524px;top:721px;width:10px;height:10px;background:rgb(126,170,144)"></div>
<div class="abs" style="left:534px;top:721px;width:10px;height:10px;background:rgb(222,234,227)"></div>
<div class="abs" style="left:544px;top:721px;width:10px;height:10px;background:rgb(180,206,190)"></div>
<div class="abs" style="left:554px;top:721px;width:10px;height:10px;background:rgb(244,248,246)"></div>
<div class="abs" style="left:564px;top:721px;width:10px;height:10px;background:rgb(80,144,106)"></div>
<div class="abs" style="left:574px;top:721px;width:10px;height:10px;background:rgb(248,251,249)"></div>
<div class="abs" style="left:584px;top:721px;width:10px;height:10px;background:rgb(35,125,71)"></div>
<div class="abs" style="left:884px;top:711px;width:10px;height:10px;background:rgb(115,163,135)"></div>
<div class="abs" style="left:894px;top:711px;width:10px;height:10px;background:rgb(211,227,218)"></div>
<div class="abs" style="left:904px;top:711px;width:10px;height:10px;background:rgb(148,184,163)"></div>
<div class="abs" style="left:914px;top:711px;width:10px;height:10px;background:rgb(126,170,144)"></div>
<div class="abs" style="left:924px;top:711px;width:10px;height:10px;background:rgb(159,191,172)"></div>
<div class="abs" style="left:934px;top:711px;width:10px;height:10px;background:rgb(222,234,227)"></div>
<div class="abs" style="left:944px;top:711px;width:10px;height:10px;background:rgb(137,177,153)"></div>
<div class="abs" style="left:954px;top:711px;width:10px;height:10px;background:rgb(67,138,96)"></div>
<div class="abs" style="left:964px;top:711px;width:10px;height:10px;background:rgb(222,234,227)"></div>
<div class="abs" style="left:884px;top:721px;width:10px;height:10px;background:rgb(35,125,71)"></div>
<div class="abs" style="left:904px;top:721px;width:10px;height:10px;background:rgb(137,177,153)"></div>
<div class="abs" style="left:914px;top:721px;width:10px;height:10px;background:rgb(126,170,144)"></div>
<div class="abs" style="left:924px;top:721px;width:10px;height:10px;background:rgb(126,170,144)"></div>
<div class="abs" style="left:934px;top:721px;width:10px;height:10px;background:rgb(201,220,209)"></div>
<div class="abs" style="left:944px;top:721px;width:10px;height:10px;background:rgb(190,213,199)"></div>
<div class="abs" style="left:964px;top:721px;width:10px;height:10px;background:rgb(211,227,218)"></div>
<div class="abs" style="left:974px;top:721px;width:10px;height:10px;background:rgb(104,157,125)"></div>
<div class="abs" style="left:1274px;top:711px;width:10px;height:10px;background:rgb(211,227,218)"></div>
<div class="abs" style="left:1284px;top:711px;width:10px;height:10px;background:rgb(201,220,209)"></div>
<div class="abs" style="left:1294px;top:711px;width:10px;height:10px;background:rgb(92,150,116)"></div>
<div class="abs" style="left:1314px;top:711px;width:10px;height:10px;background:rgb(92,150,116)"></div>
<div class="abs" style="left:1324px;top:711px;width:10px;height:10px;background:rgb(159,191,172)"></div>
<div class="abs" style="left:1334px;top:711px;width:10px;height:10px;background:rgb(92,150,116)"></div>
<div class="abs" style="left:1344px;top:711px;width:10px;height:10px;background:rgb(115,163,135)"></div>
<div class="abs" style="left:1354px;top:711px;width:10px;height:10px;background:rgb(222,234,227)"></div>
<div class="abs" style="left:1274px;top:721px;width:10px;height:10px;background:rgb(126,170,144)"></div>
<div class="abs" style="left:1284px;top:721px;width:10px;height:10px;background:rgb(190,213,199)"></div>
<div class="abs" style="left:1294px;top:721px;width:10px;height:10px;background:rgb(115,163,135)"></div>
<div class="abs" style="left:1314px;top:721px;width:10px;height:10px;background:rgb(137,177,153)"></div>
<div class="abs" style="left:1324px;top:721px;width:10px;height:10px;background:rgb(115,163,135)"></div>
<div class="abs" style="left:1344px;top:721px;width:10px;height:10px;background:rgb(35,125,71)"></div>
<div class="abs" style="left:1354px;top:721px;width:10px;height:10px;background:rgb(248,251,249)"></div>
<div class="abs" style="left:1364px;top:721px;width:10px;height:10px;background:rgb(137,177,153)"></div>
<div class="abs" style="left:1664px;top:711px;width:10px;height:10px;background:rgb(115,163,135)"></div>
<div class="abs" style="left:1674px;top:711px;width:10px;height:10px;background:rgb(92,150,116)"></div>
<div class="abs" style="left:1684px;top:711px;width:10px;height:10px;background:rgb(244,248,246)"></div>
<div class="abs" style="left:1694px;top:711px;width:10px;height:10px;background:rgb(211,227,218)"></div>
<div class="abs" style="left:1714px;top:711px;width:10px;height:10px;background:rgb(67,138,96)"></div>
<div class="abs" style="left:1724px;top:711px;width:10px;height:10px;background:rgb(148,184,163)"></div>
<div class="abs" style="left:1734px;top:711px;width:10px;height:10px;background:rgb(222,234,227)"></div>
<div class="abs" style="left:1744px;top:711px;width:10px;height:10px;background:rgb(59,135,90)"></div>
<div class="abs" style="left:1754px;top:711px;width:10px;height:10px;background:rgb(169,198,181)"></div>
<div class="abs" style="left:1664px;top:721px;width:10px;height:10px;background:rgb(126,170,144)"></div>
<div class="abs" style="left:1674px;top:721px;width:10px;height:10px;background:rgb(80,144,106)"></div>
<div class="abs" style="left:1684px;top:721px;width:10px;height:10px;background:rgb(137,177,153)"></div>
<div class="abs" style="left:1694px;top:721px;width:10px;height:10px;background:rgb(137,177,153)"></div>
<div class="abs" style="left:1714px;top:721px;width:10px;height:10px;background:rgb(137,177,153)"></div>
<div class="abs" style="left:1724px;top:721px;width:10px;height:10px;background:rgb(80,144,106)"></div>
<div class="abs" style="left:1734px;top:721px;width:10px;height:10px;background:rgb(222,234,227)"></div>
<div class="abs" style="left:1754px;top:721px;width:10px;height:10px;background:rgb(201,220,209)"></div>
<div class="abs" style="left:514px;top:821px;width:10px;height:10px;background:rgb(201,220,209)"></div>
<div class="abs" style="left:524px;top:821px;width:10px;height:10px;background:rgb(190,213,199)"></div>
<div class="abs" style="left:534px;top:821px;width:10px;height:10px;background:rgb(255,255,255)"></div>
<div class="abs" style="left:514px;top:831px;width:10px;height:10px;background:rgb(54,132,86)"></div>
<div class="abs" style="left:524px;top:831px;width:10px;height:10px;background:rgb(59,135,90)"></div>
<div class="abs" style="left:534px;top:831px;width:10px;height:10px;background:rgb(137,177,153)"></div>
<div class="abs" style="left:544px;top:831px;width:10px;height:10px;background:rgb(228,239,232)"></div>
<div class="abs" style="left:854px;top:821px;width:10px;height:10px;background:rgb(159,191,172)"></div>
<div class="abs" style="left:864px;top:821px;width:10px;height:10px;background:rgb(48,130,82)"></div>
<div class="abs" style="left:874px;top:821px;width:10px;height:10px;background:rgb(159,191,172)"></div>
<div class="abs" style="left:884px;top:821px;width:10px;height:10px;background:rgb(190,213,199)"></div>
<div class="abs" style="left:904px;top:821px;width:10px;height:10px;background:rgb(48,130,82)"></div>
<div class="abs" style="left:914px;top:821px;width:10px;height:10px;background:rgb(169,198,181)"></div>
<div class="abs" style="left:934px;top:821px;width:10px;height:10px;background:rgb(92,150,116)"></div>
<div class="abs" style="left:964px;top:821px;width:10px;height:10px;background:rgb(233,241,236)"></div>
<div class="abs" style="left:974px;top:821px;width:10px;height:10px;background:rgb(201,220,209)"></div>
<div class="abs" style="left:994px;top:821px;width:10px;height:10px;background:rgb(148,184,163)"></div>
<div class="abs" style="left:854px;top:831px;width:10px;height:10px;background:rgb(148,184,163)"></div>
<div class="abs" style="left:874px;top:831px;width:10px;height:10px;background:rgb(148,184,163)"></div>
<div class="abs" style="left:884px;top:831px;width:10px;height:10px;background:rgb(169,198,181)"></div>
<div class="abs" style="left:914px;top:831px;width:10px;height:10px;background:rgb(190,213,199)"></div>
<div class="abs" style="left:934px;top:831px;width:10px;height:10px;background:rgb(48,130,82)"></div>
<div class="abs" style="left:964px;top:831px;width:10px;height:10px;background:rgb(159,191,172)"></div>
<div class="abs" style="left:994px;top:831px;width:10px;height:10px;background:rgb(190,213,199)"></div>
<div class="abs" style="left:864px;top:841px;width:10px;height:6px;background:rgb(59,135,90)"></div>
<div class="abs" style="left:894px;top:841px;width:10px;height:6px;background:rgb(59,135,90)"></div>
<div class="abs" style="left:1294px;top:821px;width:10px;height:10px;background:rgb(233,241,236)"></div>
<div class="abs" style="left:1304px;top:821px;width:10px;height:10px;background:rgb(190,213,199)"></div>
<div class="abs" style="left:1314px;top:821px;width:10px;height:10px;background:rgb(159,191,172)"></div>
<div class="abs" style="left:1324px;top:821px;width:10px;height:10px;background:rgb(92,150,116)"></div>
<div class="abs" style="left:1334px;top:821px;width:10px;height:10px;background:rgb(211,227,218)"></div>
<div class="abs" style="left:1344px;top:821px;width:10px;height:10px;background:rgb(228,239,232)"></div>
<div class="abs" style="left:1294px;top:831px;width:10px;height:10px;background:rgb(169,198,181)"></div>
<div class="abs" style="left:1304px;top:831px;width:10px;height:10px;background:rgb(211,227,218)"></div>
<div class="abs" style="left:1324px;top:831px;width:10px;height:10px;background:rgb(104,157,125)"></div>
<div class="abs" style="left:1334px;top:831px;width:10px;height:10px;background:rgb(222,234,227)"></div>
<div class="abs" style="left:1344px;top:831px;width:10px;height:10px;background:rgb(215,230,221)"></div>
<div class="abs" style="left:1634px;top:821px;width:10px;height:10px;background:rgb(148,184,163)"></div>
<div class="abs" style="left:1644px;top:821px;width:10px;height:10px;background:rgb(40,127,75)"></div>
<div class="abs" style="left:1654px;top:821px;width:10px;height:10px;background:rgb(211,227,218)"></div>
<div class="abs" style="left:1664px;top:821px;width:10px;height:10px;background:rgb(190,213,199)"></div>
<div class="abs" style="left:1674px;top:821px;width:10px;height:10px;background:rgb(80,144,106)"></div>
<div class="abs" style="left:1684px;top:821px;width:10px;height:10px;background:rgb(169,198,181)"></div>
<div class="abs" style="left:1704px;top:821px;width:10px;height:10px;background:rgb(148,184,163)"></div>
<div class="abs" style="left:1714px;top:821px;width:10px;height:10px;background:rgb(92,150,116)"></div>
<div class="abs" style="left:1724px;top:821px;width:10px;height:10px;background:rgb(126,170,144)"></div>
<div class="abs" style="left:1734px;top:821px;width:10px;height:10px;background:rgb(244,248,246)"></div>
<div class="abs" style="left:1744px;top:821px;width:10px;height:10px;background:rgb(104,157,125)"></div>
<div class="abs" style="left:1774px;top:821px;width:10px;height:10px;background:rgb(59,135,90)"></div>
<div class="abs" style="left:1634px;top:831px;width:10px;height:10px;background:rgb(148,184,163)"></div>
<div class="abs" style="left:1654px;top:831px;width:10px;height:10px;background:rgb(67,138,96)"></div>
<div class="abs" style="left:1674px;top:831px;width:10px;height:10px;background:rgb(255,255,255)"></div>
<div class="abs" style="left:1684px;top:831px;width:10px;height:10px;background:rgb(248,251,249)"></div>
<div class="abs" style="left:1694px;top:831px;width:10px;height:10px;background:rgb(169,198,181)"></div>
<div class="abs" style="left:1704px;top:831px;width:10px;height:10px;background:rgb(255,255,255)"></div>
<div class="abs" style="left:1714px;top:831px;width:10px;height:10px;background:rgb(115,163,135)"></div>
<div class="abs" style="left:1724px;top:831px;width:10px;height:10px;background:rgb(67,138,96)"></div>
<div class="abs" style="left:1734px;top:831px;width:10px;height:10px;background:rgb(255,255,255)"></div>
<div class="abs" style="left:1744px;top:831px;width:10px;height:10px;background:rgb(104,157,125)"></div>
<div class="abs" style="left:1774px;top:831px;width:10px;height:10px;background:rgb(190,213,199)"></div>
<div class="abs" style="left:1644px;top:841px;width:10px;height:6px;background:rgb(48,130,82)"></div>
<div class="abs" style="left:674px;top:931px;width:10px;height:10px;background:rgb(201,220,209)"></div>
<div class="abs" style="left:694px;top:931px;width:10px;height:10px;background:rgb(169,198,181)"></div>
<div class="abs" style="left:704px;top:931px;width:10px;height:10px;background:rgb(180,206,190)"></div>
<div class="abs" style="left:714px;top:931px;width:10px;height:10px;background:rgb(190,213,199)"></div>
<div class="abs" style="left:724px;top:931px;width:10px;height:10px;background:rgb(104,157,125)"></div>
<div class="abs" style="left:734px;top:931px;width:10px;height:10px;background:rgb(104,157,125)"></div>
<div class="abs" style="left:744px;top:931px;width:10px;height:10px;background:rgb(222,234,227)"></div>
<div class="abs" style="left:754px;top:931px;width:10px;height:10px;background:rgb(190,213,199)"></div>
<div class="abs" style="left:764px;top:931px;width:10px;height:10px;background:rgb(201,220,209)"></div>
<div class="abs" style="left:774px;top:931px;width:10px;height:10px;background:rgb(54,132,86)"></div>
<div class="abs" style="left:674px;top:941px;width:10px;height:10px;background:rgb(159,191,172)"></div>
<div class="abs" style="left:694px;top:941px;width:10px;height:10px;background:rgb(48,130,82)"></div>
<div class="abs" style="left:704px;top:941px;width:10px;height:10px;background:rgb(80,144,106)"></div>
<div class="abs" style="left:714px;top:941px;width:10px;height:10px;background:rgb(255,255,255)"></div>
<div class="abs" style="left:724px;top:941px;width:10px;height:10px;background:rgb(104,157,125)"></div>
<div class="abs" style="left:744px;top:941px;width:10px;height:10px;background:rgb(48,130,82)"></div>
<div class="abs" style="left:754px;top:941px;width:10px;height:10px;background:rgb(115,163,135)"></div>
<div class="abs" style="left:774px;top:941px;width:10px;height:10px;background:rgb(40,127,75)"></div>
<div class="abs" style="left:784px;top:941px;width:10px;height:10px;background:rgb(222,234,227)"></div>
<div class="abs" style="left:1434px;top:931px;width:10px;height:10px;background:rgb(159,191,172)"></div>
<div class="abs" style="left:1444px;top:931px;width:10px;height:10px;background:rgb(148,184,163)"></div>
<div class="abs" style="left:1454px;top:931px;width:10px;height:10px;background:rgb(115,163,135)"></div>
<div class="abs" style="left:1464px;top:931px;width:10px;height:10px;background:rgb(67,138,96)"></div>
<div class="abs" style="left:1484px;top:931px;width:10px;height:10px;background:rgb(115,163,135)"></div>
<div class="abs" style="left:1494px;top:931px;width:10px;height:10px;background:rgb(126,170,144)"></div>
<div class="abs" style="left:1514px;top:931px;width:10px;height:10px;background:rgb(169,198,181)"></div>
<div class="abs" style="left:1524px;top:931px;width:10px;height:10px;background:rgb(92,150,116)"></div>
<div class="abs" style="left:1544px;top:931px;width:10px;height:10px;background:rgb(126,170,144)"></div>
<div class="abs" style="left:1554px;top:931px;width:10px;height:10px;background:rgb(148,184,163)"></div>
<div class="abs" style="left:1574px;top:931px;width:10px;height:10px;background:rgb(180,206,190)"></div>
<div class="abs" style="left:1584px;top:931px;width:10px;height:10px;background:rgb(115,163,135)"></div>
<div class="abs" style="left:1594px;top:931px;width:10px;height:10px;background:rgb(126,170,144)"></div>
<div class="abs" style="left:1604px;top:931px;width:10px;height:10px;background:rgb(115,163,135)"></div>
<div class="abs" style="left:1434px;top:941px;width:10px;height:10px;background:rgb(67,138,96)"></div>
<div class="abs" style="left:1444px;top:941px;width:10px;height:10px;background:rgb(228,239,232)"></div>
<div class="abs" style="left:1454px;top:941px;width:10px;height:10px;background:rgb(115,163,135)"></div>
<div class="abs" style="left:1464px;top:941px;width:10px;height:10px;background:rgb(35,125,71)"></div>
<div class="abs" style="left:1484px;top:941px;width:10px;height:10px;background:rgb(104,157,125)"></div>
<div class="abs" style="left:1494px;top:941px;width:10px;height:10px;background:rgb(40,127,75)"></div>
<div class="abs" style="left:1504px;top:941px;width:10px;height:10px;background:rgb(35,125,71)"></div>
<div class="abs" style="left:1514px;top:941px;width:10px;height:10px;background:rgb(35,125,71)"></div>
<div class="abs" style="left:1524px;top:941px;width:10px;height:10px;background:rgb(159,191,172)"></div>
<div class="abs" style="left:1534px;top:941px;width:10px;height:10px;background:rgb(237,244,240)"></div>
<div class="abs" style="left:1544px;top:941px;width:10px;height:10px;background:rgb(40,127,75)"></div>
<div class="abs" style="left:1554px;top:941px;width:10px;height:10px;background:rgb(40,127,75)"></div>
<div class="abs" style="left:1564px;top:941px;width:10px;height:10px;background:rgb(35,125,71)"></div>
<div class="abs" style="left:1574px;top:941px;width:10px;height:10px;background:rgb(137,177,153)"></div>
<div class="abs" style="left:1584px;top:941px;width:10px;height:10px;background:rgb(190,213,199)"></div>
<div class="abs" style="left:1594px;top:941px;width:10px;height:10px;background:rgb(35,125,71)"></div>
<div class="abs" style="left:1604px;top:941px;width:10px;height:10px;background:rgb(169,198,181)"></div>
<div class="abs" style="left:1504px;top:951px;width:10px;height:5px;background:rgb(222,234,227)"></div>
<div class="abs" style="left:624px;top:1071px;width:10px;height:10px;background:rgb(36,46,60)"></div>
<div class="abs" style="left:634px;top:1071px;width:10px;height:10px;background:rgb(38,48,62)"></div>
<div class="abs" style="left:654px;top:1071px;width:10px;height:10px;background:rgb(49,59,72)"></div>
<div class="abs" style="left:684px;top:1071px;width:10px;height:10px;background:rgb(58,68,80)"></div>
<div class="abs" style="left:694px;top:1071px;width:10px;height:10px;background:rgb(44,53,67)"></div>
<div class="abs" style="left:614px;top:1081px;width:10px;height:10px;background:rgb(58,68,80)"></div>
<div class="abs" style="left:624px;top:1081px;width:10px;height:10px;background:rgb(122,130,140)"></div>
<div class="abs" style="left:634px;top:1081px;width:10px;height:10px;background:rgb(46,55,69)"></div>
<div class="abs" style="left:644px;top:1081px;width:10px;height:10px;background:rgb(53,62,75)"></div>
<div class="abs" style="left:654px;top:1081px;width:10px;height:10px;background:rgb(141,147,156)"></div>
<div class="abs" style="left:664px;top:1081px;width:10px;height:10px;background:rgb(144,151,160)"></div>
<div class="abs" style="left:674px;top:1081px;width:10px;height:10px;background:rgb(104,112,123)"></div>
<div class="abs" style="left:684px;top:1081px;width:10px;height:10px;background:rgb(36,46,60)"></div>
<div class="abs" style="left:694px;top:1081px;width:10px;height:10px;background:rgb(58,68,80)"></div>
<div class="abs" style="left:1134px;top:1071px;width:10px;height:10px;background:rgb(35,45,58)"></div>
<div class="abs" style="left:1144px;top:1071px;width:10px;height:10px;background:rgb(40,50,63)"></div>
<div class="abs" style="left:1154px;top:1071px;width:10px;height:10px;background:rgb(33,43,57)"></div>
<div class="abs" style="left:1194px;top:1071px;width:10px;height:10px;background:rgb(33,43,57)"></div>
<div class="abs" style="left:1204px;top:1071px;width:10px;height:10px;background:rgb(40,50,63)"></div>
<div class="abs" style="left:1214px;top:1071px;width:10px;height:10px;background:rgb(58,68,80)"></div>
<div class="abs" style="left:1134px;top:1081px;width:10px;height:10px;background:rgb(86,94,106)"></div>
<div class="abs" style="left:1144px;top:1081px;width:10px;height:10px;background:rgb(49,59,72)"></div>
<div class="abs" style="left:1154px;top:1081px;width:10px;height:10px;background:rgb(64,73,85)"></div>
<div class="abs" style="left:1164px;top:1081px;width:10px;height:10px;background:rgb(36,46,60)"></div>
<div class="abs" style="left:1174px;top:1081px;width:10px;height:10px;background:rgb(159,165,173)"></div>
<div class="abs" style="left:1184px;top:1081px;width:10px;height:10px;background:rgb(95,103,114)"></div>
<div class="abs" style="left:1194px;top:1081px;width:10px;height:10px;background:rgb(68,76,89)"></div>
<div class="abs" style="left:1204px;top:1081px;width:10px;height:10px;background:rgb(58,68,80)"></div>
<div class="abs" style="left:1214px;top:1081px;width:10px;height:10px;background:rgb(126,133,143)"></div>
<div class="abs" style="left:1664px;top:1071px;width:10px;height:10px;background:rgb(33,43,57)"></div>
<div class="abs" style="left:1674px;top:1071px;width:10px;height:10px;background:rgb(38,48,62)"></div>
<div class="abs" style="left:1684px;top:1071px;width:10px;height:10px;background:rgb(58,68,80)"></div>
<div class="abs" style="left:1694px;top:1071px;width:10px;height:10px;background:rgb(68,76,89)"></div>
<div class="abs" style="left:1704px;top:1071px;width:10px;height:10px;background:rgb(36,46,60)"></div>
<div class="abs" style="left:1714px;top:1071px;width:10px;height:10px;background:rgb(58,68,80)"></div>
<div class="abs" style="left:1664px;top:1081px;width:10px;height:10px;background:rgb(46,55,69)"></div>
<div class="abs" style="left:1684px;top:1081px;width:10px;height:10px;background:rgb(159,165,173)"></div>
<div class="abs" style="left:1694px;top:1081px;width:10px;height:10px;background:rgb(68,76,89)"></div>
<div class="abs" style="left:1704px;top:1081px;width:10px;height:10px;background:rgb(132,138,148)"></div>
<div class="abs" style="left:1714px;top:1081px;width:10px;height:10px;background:rgb(150,156,165)"></div>
<div class="abs" style="left:1724px;top:1081px;width:10px;height:10px;background:rgb(159,165,173)"></div>
<div class="abs" style="left:1734px;top:1081px;width:10px;height:10px;background:rgb(40,50,63)"></div>
<div class="abs" style="left:1744px;top:1081px;width:10px;height:10px;background:rgb(104,112,123)"></div>
<div class="abs" style="left:1754px;top:1081px;width:10px;height:10px;background:rgb(104,112,123)"></div>
</div>
<div class="hl"></div>
</body></html>
